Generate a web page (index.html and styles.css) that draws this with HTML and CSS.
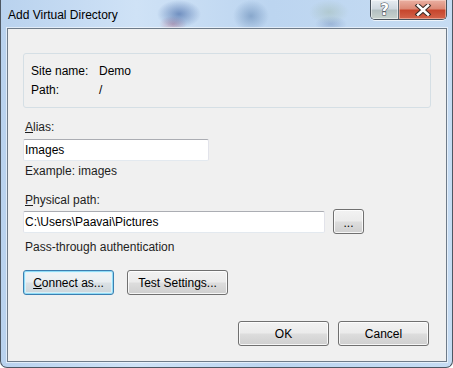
FILE: index.html
```html
<!DOCTYPE html>
<html lang="en">
<head>
    <meta charset="UTF-8">
    <title>Add Virtual Directory</title>
    <link rel="stylesheet" href="styles.css">
</head>
<body>
    <div class="window">
        <div class="titlebar">
            <span class="title">Add Virtual Directory</span>
            <div class="caption-buttons">
                <div class="cap-btn help">?</div>
                <div class="cap-btn close">
                    <svg width="18" height="12" viewBox="0 0 18 12">
                        <path d="M4 1.5 L14 10.5 M14 1.5 L4 10.5" stroke="#3a2a25" stroke-width="4.6" stroke-linecap="square" fill="none"/>
                        <path d="M4 1.5 L14 10.5 M14 1.5 L4 10.5" stroke="#ffffff" stroke-width="2.6" stroke-linecap="square" fill="none"/>
                    </svg>
                </div>
            </div>
        </div>

        <div class="client">
            <div class="group">
                <div class="info-grid">
                    <span>Site name:</span><span>Demo</span>
                    <span>Path:</span><span>/</span>
                </div>
            </div>

            <div class="field-label label-alias"><u>A</u>lias:</div>
            <input class="textbox alias-box" type="text" value="Images" readonly>
            <div class="hint hint-example">Example: images</div>

            <div class="field-label label-path"><u>P</u>hysical path:</div>
            <div class="path-row">
                <input class="textbox path-box" type="text" value="C:\Users\Paavai\Pictures" readonly>
                <button class="btn browse">...</button>
            </div>
            <div class="hint hint-auth">Pass-through authentication</div>

            <div class="btn-row">
                <button class="btn default connect"><u>C</u>onnect as...</button>
                <button class="btn test">Test Settings...</button>
            </div>

            <div class="footer">
                <button class="btn wide">OK</button>
                <button class="btn wide">Cancel</button>
            </div>
        </div>
    </div>
</body>
</html>
```

FILE: styles.css
```css
html, body {
    margin: 0;
    padding: 0;
    background: #ffffff;
}
body {
    font-family: "Liberation Sans", Arial, sans-serif;
    font-size: 12px;
    color: #1e1e1e;
}
.window {
    width: 453px;
    height: 368px;
    box-sizing: border-box;
    display: flex;
    flex-direction: column;
    padding: 0 5px 5px 6px;
    border: 1px solid #4d5763;
    border-top: none;
    border-radius: 0 0 7px 7px;
    background:
        radial-gradient(ellipse 22px 14px at 178px 14px, rgba(40, 80, 150, 0.55), rgba(40, 80, 150, 0) 100%),
        radial-gradient(ellipse 14px 8px at 172px 24px, rgba(160, 60, 90, 0.35), rgba(160, 60, 90, 0) 100%),
        radial-gradient(ellipse 18px 16px at 250px 16px, rgba(70, 110, 160, 0.45), rgba(70, 110, 160, 0) 100%),
        radial-gradient(ellipse 20px 12px at 328px 12px, rgba(150, 175, 150, 0.35), rgba(150, 175, 150, 0) 100%),
        radial-gradient(ellipse 16px 8px at 330px 24px, rgba(90, 120, 170, 0.35), rgba(90, 120, 170, 0) 100%),
        linear-gradient(to right, #b9d2ee 0%, #cfe2f6 30%, #bcd5f0 60%, #c6dcf3 100%);
}
.titlebar {
    height: 28px;
    display: flex;
    align-items: flex-start;
    padding-left: 1px;
}
.title {
    padding-top: 7px;
    line-height: 16px;
    color: #000;
}
.caption-buttons {
    margin-left: auto;
    margin-right: 0;
    display: flex;
    height: 19px;
    border: 1px solid #48525c;
    border-top: none;
    border-radius: 0 0 5px 5px;
    overflow: hidden;
    box-shadow: 0 1px 0 rgba(255, 255, 255, 0.7);
}
.cap-btn {
    height: 19px;
    display: flex;
    align-items: center;
    justify-content: center;
}
.help {
    width: 27px;
    border-right: 1px solid #5a6670;
    background: linear-gradient(#e7edf2 0%, #d0d9e0 45%, #b3c0c2 55%, #c8d2cd 100%);
    box-shadow: inset 0 0 0 1px rgba(255, 255, 255, 0.5);
    font: bold 15px "DejaVu Sans", sans-serif;
    color: #ffffff;
    -webkit-text-stroke: 1px #3d4650;
    paint-order: stroke fill;
}
.close {
    width: 47px;
    background: linear-gradient(#eab0a2 0%, #dc8a77 45%, #c7462d 55%, #d3644c 100%);
    box-shadow: inset 0 0 0 1px rgba(255, 230, 220, 0.45);
}
.client {
    flex: 1;
    background: #f0f0f0;
    border: 1px solid #6e7b89;
    box-shadow: 0 0 0 1px rgba(255, 255, 255, 0.55);
    padding: 24px 17px 0 15px;
    display: flex;
    flex-direction: column;
    align-items: flex-start;
}
.group {
    align-self: stretch;
    margin-right: -2px;
    border: 1px solid #d5dfe5;
    border-radius: 3px;
    padding: 8px 7px 7px;
}
.info-grid {
    display: grid;
    grid-template-columns: 68px auto;
    line-height: 19px;
    color: #000;
}
.field-label, .hint {
    line-height: 16px;
    margin-left: 2px;
}
.label-alias {
    margin-top: 11px;
}
.hint-example {
    margin-top: 2px;
}
.label-path {
    margin-top: 13px;
}
.hint-auth {
    margin-top: 5px;
}
.textbox {
    box-sizing: border-box;
    height: 22px;
    margin: 0;
    padding: 0 1px;
    font-family: inherit;
    font-size: 12px;
    color: #000;
    background: #ffffff;
    border: 1px solid #e2e3ea;
    border-top-color: #abadb3;
    border-bottom-color: #e3e9ef;
    border-radius: 2px;
    outline: none;
}
.alias-box {
    width: 186px;
    margin-top: 4px;
}
.path-row {
    margin-top: 1px;
    display: flex;
    align-items: center;
    gap: 8px;
}
.path-box {
    width: 302px;
}
.btn {
    box-sizing: border-box;
    height: 25px;
    margin: 0;
    padding: 0;
    font-family: inherit;
    font-size: 12px;
    color: #000;
    border: 1px solid #707070;
    border-radius: 3px;
    background: linear-gradient(#f2f2f2 0%, #ebebeb 48%, #dddddd 52%, #cfcfcf 100%);
    box-shadow: inset 0 0 0 1px rgba(255, 255, 255, 0.8);
}
.browse {
    width: 31px;
    height: 25px;
    line-height: 20px;
    padding-top: 2px;
}
.btn-row {
    margin-top: 15px;
    display: flex;
    gap: 13px;
}
.connect {
    width: 91px;
}
.test {
    width: 101px;
}
.default {
    border-color: #3c7fb1;
    box-shadow: inset 0 0 0 1px #8fdcf7, inset 0 0 0 2px rgba(220, 244, 253, 0.8);
    background: linear-gradient(#f1f4f6 0%, #e9eef1 48%, #dbe1e5 52%, #ccd5da 100%);
}
.footer {
    align-self: stretch;
    margin-top: 26px;
    display: flex;
    justify-content: flex-end;
    gap: 9px;
}
.wide {
    width: 91px;
}
```
